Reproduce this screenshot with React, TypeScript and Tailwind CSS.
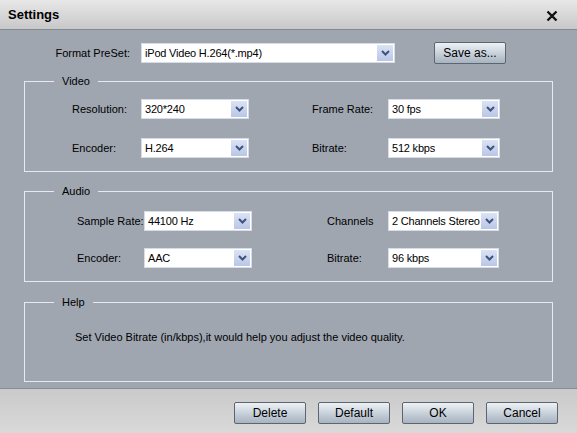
import type { ReactNode } from 'react';

const font = { fontFamily: '"Liberation Sans", Arial, sans-serif' };

function Chevron() {
  return (
    <svg width="9" height="6" viewBox="0 0 9 6">
      <polyline points="1,1 4.5,4.5 8,1" fill="none" stroke="#3f527c" strokeWidth="2" />
    </svg>
  );
}

function Select({ value, className = '' }: { value: string; className?: string }) {
  return (
    <div className={`flex h-[20px] items-stretch border border-[#d7dde6] bg-white ${className}`}>
      <span className="flex-1 overflow-hidden whitespace-nowrap pl-[3px] text-[11px] leading-[18px] tracking-[-0.2px] text-black">{value}</span>
      <span className="m-[1px] flex w-[16px] shrink-0 items-center justify-center bg-gradient-to-b from-[#dbe3f5] to-[#b9c6e6]">
        <Chevron />
      </span>
    </div>
  );
}

function Button({ children, className = '' }: { children: ReactNode; className?: string }) {
  return (
    <button className={`h-[22px] w-[72px] shrink-0 rounded-[2px] border border-[#5b6670] bg-gradient-to-b from-[#eef2f6] via-[#c9d2db] to-[#a7b3bf] text-[12px] text-black ${className}`}>
      {children}
    </button>
  );
}

function Group({ title, children, className = '' }: { title: string; children: ReactNode; className?: string }) {
  return (
    <fieldset className={`mx-[24px] border border-[#e6eaf0] ${className}`}>
      <legend className="ml-[29px] px-[8px] text-[11px] leading-[13px] text-black">{title}</legend>
      {children}
    </fieldset>
  );
}

export default function App() {
  return (
    <div className="flex h-[433px] w-[577px] flex-col overflow-hidden bg-[#9fa6b0]" style={font}>
      <div className="flex h-[30px] shrink-0 items-center justify-between border-b border-[#838a94] bg-gradient-to-b from-[#e8e8e8] to-[#c8c8c8] pl-[8px] pr-[19px]">
        <span className="text-[13px] font-bold text-black">Settings</span>
        <svg width="12" height="12" viewBox="0 0 12 12" className="mt-[2px]">
          <path d="M1.5 1.5 L10.5 10.5 M10.5 1.5 L1.5 10.5" stroke="#111" strokeWidth="2.4" />
        </svg>
      </div>

      <div className="flex h-[358px] shrink-0 flex-col">
        <div className="mt-[12px] flex items-center">
          <span className="w-[130px] shrink-0 whitespace-nowrap text-right text-[11px] text-black">Format PreSet:</span>
          <Select value="iPod Video H.264(*.mp4)" className="ml-[11px] w-[254px] shrink-0" />
          <Button className="ml-[39px]">Save as...</Button>
        </div>

        <Group title="Video" className="mt-[11px] h-[97px]">
          <div className="mt-[11px] grid grid-cols-[69px_108px_63px_76px_112px] items-center gap-y-[19px] pl-[47px] text-[11px] text-black">
            <span>Resolution:</span>
            <Select value="320*240" />
            <span />
            <span>Frame Rate:</span>
            <Select value="30 fps" />
            <span>Encoder:</span>
            <Select value="H.264" />
            <span />
            <span>Bitrate:</span>
            <Select value="512 kbps" />
          </div>
        </Group>

        <Group title="Audio" className="mt-[13px] h-[97px]">
          <div className="mt-[13px] grid grid-cols-[67px_108px_75px_61px_111px] items-center gap-y-[17px] pl-[52px] text-[11px] text-black">
            <span className="whitespace-nowrap">Sample Rate:</span>
            <Select value="44100 Hz" />
            <span />
            <span>Channels</span>
            <Select value="2 Channels Stereo" />
            <span>Encoder:</span>
            <Select value="AAC" />
            <span />
            <span>Bitrate:</span>
            <Select value="96 kbps" />
          </div>
        </Group>

        <Group title="Help" className="mt-[14px] h-[86px]">
          <p className="mt-[20px] pl-[50px] text-[11px] text-black">
            Set Video Bitrate (in/kbps),it would help you adjust the video quality.
          </p>
        </Group>
      </div>

      <div className="flex flex-1 items-start justify-end gap-[12px] border-t border-[#858d97] bg-gradient-to-b from-[#cacaca] to-[#d9d9d9] pr-[19px] pt-[13px]">
        <Button>Delete</Button>
        <Button>Default</Button>
        <Button>OK</Button>
        <Button>Cancel</Button>
      </div>
    </div>
  );
}
